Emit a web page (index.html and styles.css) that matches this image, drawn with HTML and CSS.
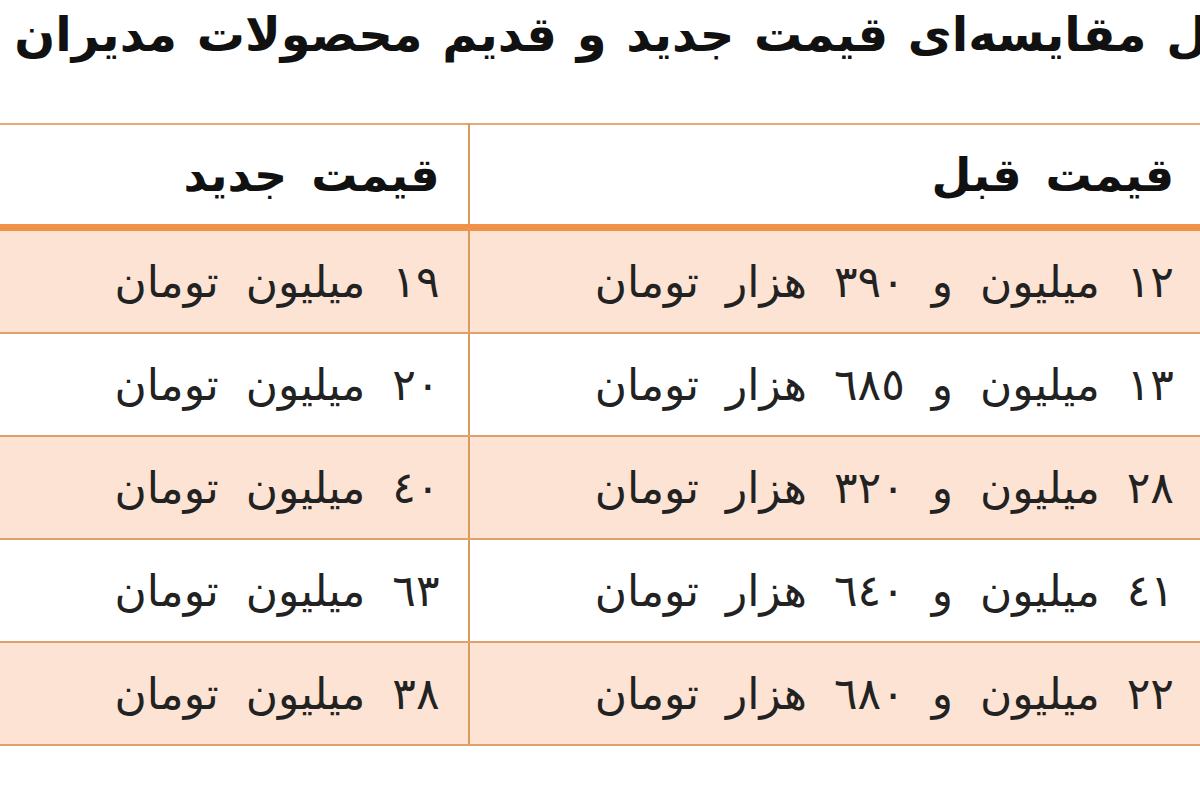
FILE: index.html
```html
<!DOCTYPE html>
<html lang="fa" dir="rtl">
<head>
<meta charset="utf-8">
<title>جدول مقایسه‌ای قیمت</title>
<link rel="stylesheet" href="styles.css">
</head>
<body>
<div class="page">
  <h1 class="title">جدول مقایسه‌ای قیمت جدید و قدیم محصولات مدیران خودرو</h1>
  <table class="prices">
    <thead>
      <tr>
        <th class="col-old">قیمت قبل</th>
        <th class="col-new">قیمت جدید</th>
      </tr>
    </thead>
    <tbody>
      <tr class="odd">
        <td>١٢ میلیون و ٣٩٠ هزار تومان</td>
        <td>١٩ میلیون تومان</td>
      </tr>
      <tr>
        <td>١٣ میلیون و ٦٨٥ هزار تومان</td>
        <td>٢٠ میلیون تومان</td>
      </tr>
      <tr class="odd">
        <td>٢٨ میلیون و ٣٢٠ هزار تومان</td>
        <td>٤٠ میلیون تومان</td>
      </tr>
      <tr>
        <td>٤١ میلیون و ٦٤٠ هزار تومان</td>
        <td>٦٣ میلیون تومان</td>
      </tr>
      <tr class="odd">
        <td>٢٢ میلیون و ٦٨٠ هزار تومان</td>
        <td>٣٨ میلیون تومان</td>
      </tr>
    </tbody>
  </table>
</div>
</body>
</html>
```

FILE: styles.css
```css
html, body {
  margin: 0;
  padding: 0;
  background: #ffffff;
}

.page {
  width: 1200px;
  height: 800px;
  overflow: hidden;
  direction: rtl;
  background: #ffffff;
  font-family: "DejaVu Sans", "Noto Sans", sans-serif;
  color: #1c1c1c;
}

.title {
  margin: 0 -100px 0 0;
  height: 123px;
  padding-top: 6px;
  box-sizing: border-box;
  font-size: 48px;
  font-weight: bold;
  line-height: 56px;
  word-spacing: 3px;
  white-space: nowrap;
  color: #111;
}

.prices {
  width: 1236px;
  margin-right: -4px;
  border-collapse: collapse;
  table-layout: fixed;
}

.prices th,
.prices td {
  text-align: right;
  vertical-align: middle;
  white-space: nowrap;
  padding: 0 30px 0 0;
}

.prices th {
  height: 99px;
  font-size: 46px;
  font-weight: bold;
  word-spacing: 8px;
  border-top: 2px solid #e6ab74;
  border-bottom: 7px solid #f0924a;
  background: #ffffff;
  color: #111;
}

.prices .col-old {
  width: 702px;
  border-left: 2px solid #d99a5c;
}

.prices .col-new {
  width: 470px;
  padding-right: 28px;
}

.prices td {
  height: 101px;
  font-size: 44px;
  font-weight: normal;
  word-spacing: 13px;
  border-bottom: 2px solid #dfa06c;
  background: #ffffff;
  color: #222;
}

.prices td:first-child {
  border-left: 2px solid #d99a5c;
}

.prices td:last-child {
  padding-right: 28px;
}

.prices tr.odd td {
  background: #fce3d3;
}
```
